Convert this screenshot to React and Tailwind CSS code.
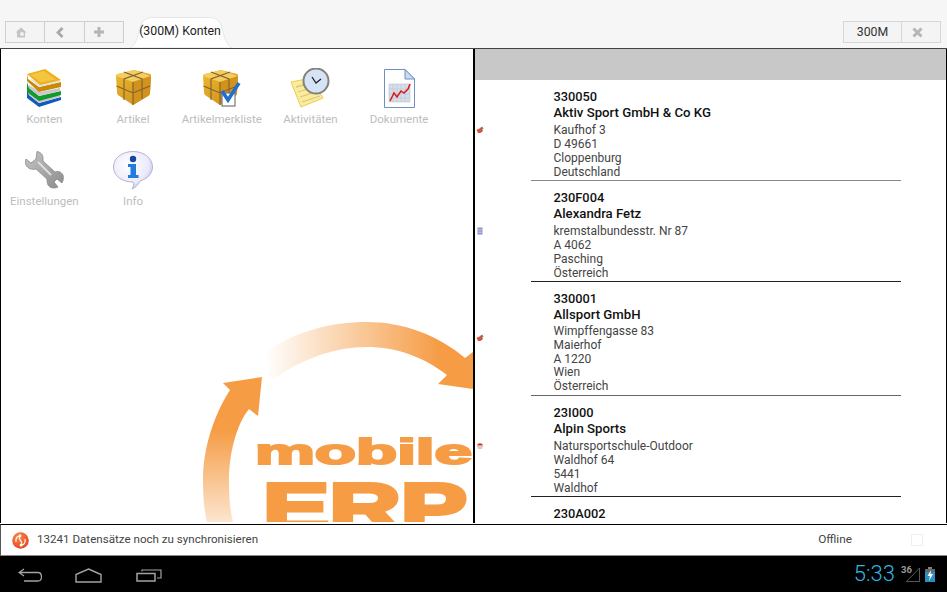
import React from 'react';

const rows = [
  { code: '330050', name: 'Aktiv Sport GmbH & Co KG', lines: ['Kaufhof 3', 'D 49661', 'Cloppenburg', 'Deutschland'], icon: 'red', line: 'border-[#8a8a8a]', lead: 'leading-[14px]', pb: 'pb-[1px]' },
  { code: '230F004', name: 'Alexandra Fetz', lines: ['kremstalbundesstr. Nr 87', 'A 4062', 'Pasching', 'Österreich'], icon: 'blue', line: 'border-[#222]', lead: 'leading-[14px]', pb: 'pb-[1px]' },
  { code: '330001', name: 'Allsport GmbH', lines: ['Wimpffengasse 83', 'Maierhof', 'A 1220', 'Wien', 'Österreich'], icon: 'red', line: 'border-[#666]', lead: 'leading-[13.800px]', pb: 'pb-[1px]' },
  { code: '23I000', name: 'Alpin Sports', lines: ['Natursportschule-Outdoor', 'Waldhof 64', '5441', 'Waldhof'], icon: 'hat', line: 'border-[#222]', lead: 'leading-[14px]', pb: 'pb-[1px]' },
];

const BoxShape = ({ id }) => (
  <>
    <defs>
      <linearGradient id={id} x1="0" y1="0" x2="1" y2="1">
        <stop offset="0" stopColor="#efb92f" />
        <stop offset="1" stopColor="#c98a18" />
      </linearGradient>
    </defs>
    <path d="M19 1 L35 5 Q36 5 36 7 L35 24 Q35 26 33 27 L18 36 L3 26 Q2 25 2 23 L1 7 Q1 5 3 5 Z" fill={`url(#${id})`} />
    <path d="M1 7 L18 13 L36 7 L19 1 L3 5 Z" fill="#f3cd5e" />
    <path d="M18 13 L18 36 L33 27 Q35 26 35 24 L36 7 Z" fill="#d3921c" />
    <path d="M9 3 L27 10 L27 30 M28 3 L9 10 L9 31 M1.500 17 L18 24 L35 17 M18 13 L18 36" fill="none" stroke="#7f6230" strokeWidth="1.100" />
  </>
);

const IconBooks = () => (
  <svg width="36" height="40" viewBox="0 0 36 40">
    <path d="M1 22 L1 30 L13 39 L35 32 L35 29 L13 35 L3 27 Z" fill="#1259c0" />
    <path d="M3 25 L3 27 L13 35 L34 29 L34 27 L14 31 Z" fill="#c9c9c9" />
    <path d="M1 14 L1 24 L13 33 L35 27 L35 23 L13 28 L3 20 Z" fill="#129a2e" />
    <path d="M3 17 L3 20 L13 28 L34 23 L34 20 L14 24 Z" fill="#c9c9c9" />
    <path d="M1 6 L1 13 L13 24 L35 19 L35 14 L13 19 L2 11 Z" fill="#c98a08" />
    <path d="M3 10 L13 19 L34 14 L34 12 L14 15 Z" fill="#e2e2e2" />
    <path d="M1 6 L19 1 L35 12 L14 17 Z" fill="#eeb014" />
    <path d="M4 6.500 L18 3 L30 11.500 L15 14.500 Z" fill="#f3c540" />
  </svg>
);

const IconBox = () => (
  <svg width="37" height="38" viewBox="0 0 37 38">
    <BoxShape id="boxA" />
  </svg>
);

const IconBoxCheck = () => (
  <svg width="39" height="39" viewBox="0 0 39 39">
    <BoxShape id="boxB" />
    <rect x="20" y="24" width="13" height="13" fill="#fff" stroke="#777" strokeWidth="1.200" />
    <path d="M20 22 L26 31 L37 14" fill="none" stroke="#1e6fd0" strokeWidth="3.600" />
  </svg>
);

const IconNotes = () => (
  <svg width="40" height="40" viewBox="0 0 40 40">
    <path d="M1 14 L21 10 L33 30 L11 39 Z" fill="#fbeb9c" stroke="#eacb55" strokeWidth="1" />
    <path d="M6 19 L21 15 M8 24 L24 19 M10 29 L28 23 M12 34 L30 28" stroke="#d8c77f" strokeWidth="1.300" />
    <circle cx="26" cy="13" r="12.500" fill="#d5e3f6" stroke="#85807a" strokeWidth="2" />
    <path d="M22 9 L26 15 L31 11" fill="none" stroke="#222" strokeWidth="1.300" />
  </svg>
);

const IconDoc = () => (
  <svg width="31" height="39" viewBox="0 0 31 39">
    <path d="M0.500 0.500 L21 0.500 L30.500 10 L30.500 38.500 L0.500 38.500 Z" fill="#fff" stroke="#6f8fc0" />
    <path d="M21 0.500 L21 10 L30.500 10 Z" fill="#cbdcf2" stroke="#6f8fc0" />
    <rect x="5" y="15" width="21" height="18" fill="#d6dee8" stroke="#aab7c7" strokeWidth="0.500" />
    <path d="M9 15 V33 M13 15 V33 M17 15 V33 M21 15 V33 M5 20 H26 M5 25 H26 M5 29 H26" stroke="#b4c0ce" strokeWidth="0.500" />
    <path d="M6 32 L10 24 L13 28 L17 22 L20 24 L24 20 L26 15" fill="none" stroke="#d71a1a" strokeWidth="1.500" />
  </svg>
);

const IconWrench = () => (
  <svg width="39" height="38" viewBox="0 0 39 38">
    <defs>
      <linearGradient id="wrenchG" x1="0" y1="0" x2="1" y2="1">
        <stop offset="0" stopColor="#c4c4c4" />
        <stop offset="1" stopColor="#8d8d8d" />
      </linearGradient>
    </defs>
    <path d="M12 0.500 C15 1 18 3 18 7 C18 9 18 10 19 11 L30 21 C32 20 36 20 38 24 C39 27 38 30 37 32 L32 28 L29 31 L33 36 C29 38 25 37 23 34 C22 32 22 30 22 28 L11 18 C7 19 3 18 1 14 C0 12 0 10 1 8 L6 12 L11 8 Z" fill="url(#wrenchG)" stroke="#808080" strokeWidth="0.700" />
    <path d="M13 11 L26 24" stroke="#dedede" strokeWidth="2" />
  </svg>
);

const IconInfo = () => (
  <svg width="40" height="39" viewBox="0 0 40 39">
    <defs>
      <radialGradient id="infoG" cx="0.400" cy="0.350" r="0.700">
        <stop offset="0" stopColor="#ffffff" />
        <stop offset="0.700" stopColor="#eceafa" />
        <stop offset="1" stopColor="#bcbde6" />
      </radialGradient>
    </defs>
    <path d="M20 0.500 C31 0.500 39.500 7 39.500 16 C39.500 23 34 28 27 30 C25 34 22 37 19 38 C21 35 21 33 20 31 C9 31 0.500 25 0.500 16 C0.500 7 9 0.500 20 0.500 Z" fill="url(#infoG)" stroke="#b3b5d6" />
    <circle cx="20" cy="8" r="3.200" fill="#12489e" />
    <path d="M15 13 H23 V24 H25.500 V27 H15 V24 H17.500 V16 H15 Z" fill="#1f7bdc" />
  </svg>
);

const menu = [
  { label: 'Konten', Icon: IconBooks },
  { label: 'Artikel', Icon: IconBox },
  { label: 'Artikelmerkliste', Icon: IconBoxCheck },
  { label: 'Aktivitäten', Icon: IconNotes },
  { label: 'Dokumente', Icon: IconDoc },
  { label: 'Einstellungen', Icon: IconWrench },
  { label: 'Info', Icon: IconInfo },
];

const RowIcon = ({ type }) => {
  if (type === 'blue') {
    return (
      <svg width="8" height="8" viewBox="0 0 8 8">
        <rect x="1.500" y="0.500" width="5" height="7" fill="#8b93c9" />
        <path d="M2 2.500 H6 M2 4 H6 M2 5.500 H6" stroke="#dfe2f2" strokeWidth="0.500" />
      </svg>
    );
  }
  if (type === 'hat') {
    return (
      <svg width="8" height="8" viewBox="0 0 8 8">
        <path d="M1 3.500 C2 0.500 6 0.500 7 3.500 Z" fill="#e0262b" />
        <path d="M1 4 H7 L6 7 H2 Z" fill="#cfcfcf" />
      </svg>
    );
  }
  return (
    <svg width="8" height="8" viewBox="0 0 8 8">
      <path d="M0.500 3.500 L6 2.500 L7 5 L4.500 7 H2 Z" fill="#e2502f" />
      <path d="M3 2.500 L6.500 0.500 L7.500 3 L5 3.500 Z" fill="#7b7b7b" />
    </svg>
  );
};

const Logo = () => (
  <svg className="absolute left-0 top-0" width="473" height="473" viewBox="0 49 473 473">
    <defs>
      <linearGradient id="arcTop" gradientUnits="userSpaceOnUse" x1="265" y1="0" x2="440" y2="0">
        <stop offset="0" stopColor="#f59c45" stopOpacity="0" />
        <stop offset="1" stopColor="#f59c45" />
      </linearGradient>
      <linearGradient id="arcLeft" gradientUnits="userSpaceOnUse" x1="0" y1="430" x2="0" y2="535">
        <stop offset="0" stopColor="#f59c45" />
        <stop offset="1" stopColor="#f59c45" stopOpacity="0.150" />
      </linearGradient>
    </defs>
    <path d="M263 354 C295 331 331 322 367 322 C403 322 438 335 465 358 L473 352 L473 389 L438 384 L447 375 C424 357 396 347 367 347 C335 347 303 358 272 380 Z" fill="url(#arcTop)" />
    <path d="M262 377 L258 416 L249 409 C236 425 229 455 229 480 C229 498 230 510 233 522 L207 522 C204 510 203 495 203 480 C203 448 214 415 230 390 L223 383 Z" fill="url(#arcLeft)" />
    <text x="255" y="463.500" fontFamily="'Liberation Sans', sans-serif" fontWeight="700" fontSize="35" fill="#f59c45" stroke="#f59c45" strokeWidth="2" textLength="217" lengthAdjust="spacingAndGlyphs">mobile</text>
    <text x="263" y="530" fontFamily="'Liberation Sans', sans-serif" fontWeight="700" fontSize="66" fill="#f59c45" stroke="#f59c45" strokeWidth="4" textLength="204" lengthAdjust="spacingAndGlyphs">ERP</text>
  </svg>
);

export default function App() {
  return (
    <div className="w-[947px] h-[592px] flex flex-col overflow-hidden bg-black font-['Roboto',sans-serif]">
      {/* top bar */}
      <div className="h-[48px] shrink-0 bg-[#f6f6f6] flex items-start justify-between pr-[6px] pl-[5px]">
        <div className="flex items-start">
          <div className="flex mt-[21px] h-[22px] border border-[#cfcfcf] bg-[#f4f4f4]">
            <div className="w-[39px] flex items-center justify-center border-r border-[#cfcfcf] pr-[9px]">
              <svg width="12" height="11" viewBox="0 0 12 11">
                <path d="M6 0.500 L11.500 5.500 L10 5.500 L10 10.500 L2 10.500 L2 5.500 L0.500 5.500 Z" fill="#c4c4c4" />
                <circle cx="7" cy="7" r="2" fill="#f0f0f0" />
              </svg>
            </div>
            <div className="w-[40px] flex items-center justify-center border-r border-[#cfcfcf] pr-[10px]">
              <svg width="8" height="11" viewBox="0 0 8 11">
                <path d="M6.500 1 L2 5.500 L6.500 10" fill="none" stroke="#a9a9a9" strokeWidth="2.800" />
              </svg>
            </div>
            <div className="w-[38px] flex items-center justify-center pr-[11px]">
              <svg width="12" height="12" viewBox="0 0 12 12">
                <path d="M6 1 V11 M1 6 H11" stroke="#b5b5b5" strokeWidth="3" />
              </svg>
            </div>
          </div>
          <div className="relative ml-[6px] mt-[17px] h-[31px] w-[102px] flex items-center justify-center">
            <svg className="absolute left-0 top-0" width="102" height="31" viewBox="0 0 102 31">
              <path d="M0 31 C6 27 8 20 10 11 C12 3 16 0.500 24 0.500 L78 0.500 C86 0.500 90 3 92 11 C94 20 96 27 102 31 Z" fill="#fff" stroke="#e6e6e6" />
            </svg>
            <span className="relative text-[12.300px] leading-none text-[#222] -mt-[2px] -ml-[2px]">(300M) Konten</span>
          </div>
        </div>
        <div className="flex mt-[21px] h-[22px] border border-[#d6d6d6] bg-[#f4f4f4]">
          <div className="w-[58px] flex items-center justify-center border-r border-[#d6d6d6] text-[12.300px] text-[#333]">300M</div>
          <div className="w-[38px] flex items-center justify-center pr-[8px]">
            <svg width="11" height="11" viewBox="0 0 11 11">
              <path d="M1.500 1.500 L9.500 9.500 M9.500 1.500 L1.500 9.500" stroke="#b5b5b5" strokeWidth="3" />
            </svg>
          </div>
        </div>
      </div>

      {/* panels */}
      <div className="h-[475px] shrink-0 flex border-t border-[#444] bg-white">
        <div className="relative w-[473px] shrink-0 overflow-hidden border-l border-black">
          <div className="absolute left-0 top-0 -ml-px">
            <Logo />
          </div>
          <div className="relative grid grid-cols-[repeat(5,88.700px)] auto-rows-[82px] pt-[19px] -ml-px">
            {menu.map(({ label, Icon }) => (
              <div key={label} className="flex flex-col items-center">
                <div className="h-[40px] flex items-center justify-center">
                  <Icon />
                </div>
                <span className="mt-[4px] text-[11.500px] leading-[14px] text-[#bdbdbd] whitespace-nowrap">{label}</span>
              </div>
            ))}
          </div>
        </div>

        <div className="w-[474px] shrink-0 border-l-2 border-r border-black h-full overflow-hidden flex flex-col">
          <div className="h-[31px] shrink-0 bg-[#c8c8c8]" />
          {rows.map((row) => (
            <div key={row.code} className={`shrink-0 ml-[56px] mr-[45px] border-b ${row.line} pt-[9px] ${row.pb} relative`}>
              <div className="absolute -left-[55px] top-1/2 -mt-[4px] flex">
                <RowIcon type={row.icon} />
              </div>
              <div className="pl-[22.500px] text-[12.800px] leading-[16px] font-medium text-[#111]">{row.code}</div>
              <div className="pl-[22.500px] text-[13.200px] leading-[16px] font-medium text-[#111]">{row.name}</div>
              <div className={`pl-[22.500px] mt-[2px] text-[12px] ${row.lead} text-[#444]`}>
                {row.lines.map((l) => (
                  <div key={l}>{l}</div>
                ))}
              </div>
            </div>
          ))}
          <div className="ml-[78.500px] pt-[9px] text-[12.800px] leading-[16px] font-medium text-[#111]">230A002</div>
        </div>
      </div>

      {/* status bar */}
      <div className="h-[1px] shrink-0 bg-white" />
      <div className="h-[32px] shrink-0 bg-white border-t border-b border-t-black border-b-[#888] border-l border-l-[#555] flex items-center pl-[11px] pr-[24px]">
        <svg width="17" height="17" viewBox="0 0 17 17">
          <defs>
            <radialGradient id="syncG" cx="0.400" cy="0.300" r="0.800">
              <stop offset="0" stopColor="#f98a4e" />
              <stop offset="1" stopColor="#e2401b" />
            </radialGradient>
          </defs>
          <circle cx="8.500" cy="8.500" r="8.300" fill="url(#syncG)" />
          <path d="M4 10 C3 6 6 3 9 4 L7.500 2.500 M9 4 L7 5.500 M13 7 C14 11 11 14 8 13 L9.500 14.500 M8 13 L10 11.500 M7 6 L10 11" fill="none" stroke="#fff" strokeWidth="1.200" />
        </svg>
        <span className="ml-[8px] text-[11.600px] text-[#444]">13241 Datensätze noch zu synchronisieren</span>
        <span className="ml-auto text-[11.800px] text-[#444]">Offline</span>
        <div className="ml-[59px] w-[12px] h-[12px] border border-[#eeeeee] rounded-[1px]" />
      </div>

      {/* android nav */}
      <div className="flex-1 bg-black flex items-center justify-between pl-[18px] pr-[12px]">
        <div className="flex items-center gap-[33px] pt-[2px]">
          <svg width="24" height="14" viewBox="0 0 24 14">
            <path d="M6 1 L1 4.500 L6 8 M1 4.500 H20 C23 4.500 23.500 7 23.500 9 C23.500 12 22 13 20 13 H6" fill="none" stroke="#a3a3a3" strokeWidth="1.300" />
          </svg>
          <svg width="27" height="15" viewBox="0 0 27 15">
            <path d="M13.500 1 L26 6.500 V14 H1 V6.500 Z" fill="none" stroke="#a3a3a3" strokeWidth="1.400" />
          </svg>
          <svg width="26" height="14" viewBox="0 0 26 14" className="ml-[1px]">
            <path d="M1 5.500 H19 V13 H1 Z" fill="none" stroke="#a3a3a3" strokeWidth="1.500" />
            <path d="M6 3.500 V2 H25 V10 H21" fill="none" stroke="#a3a3a3" strokeWidth="1.200" />
          </svg>
        </div>
        <div className="flex items-center">
          <span className="text-[22px] leading-none font-light text-[#33b5e5]">5:33</span>
          <div className="relative w-[22px] h-[15px] ml-[6px]">
            <span className="absolute left-0 -top-[2px] text-[9.500px] leading-none font-bold text-[#9a9a9a]">36</span>
            <svg className="absolute left-[5px] top-0" width="14" height="15" viewBox="0 0 14 15">
              <path d="M13.500 1 V14.500 H0.500 Z" fill="none" stroke="#6f6f6f" strokeWidth="0.800" />
            </svg>
          </div>
          <svg className="ml-[2px]" width="10" height="15" viewBox="0 0 10 15">
            <rect x="3" y="0" width="4" height="2" fill="#808080" />
            <rect x="0" y="2" width="10" height="13" fill="#2c8fbd" />
            <rect x="0" y="2" width="10" height="3" fill="#666" />
            <path d="M6 3 L2.500 9 H5 L4 14 L8 7 H5.500 Z" fill="#fff" />
          </svg>
        </div>
      </div>
    </div>
  );
}
